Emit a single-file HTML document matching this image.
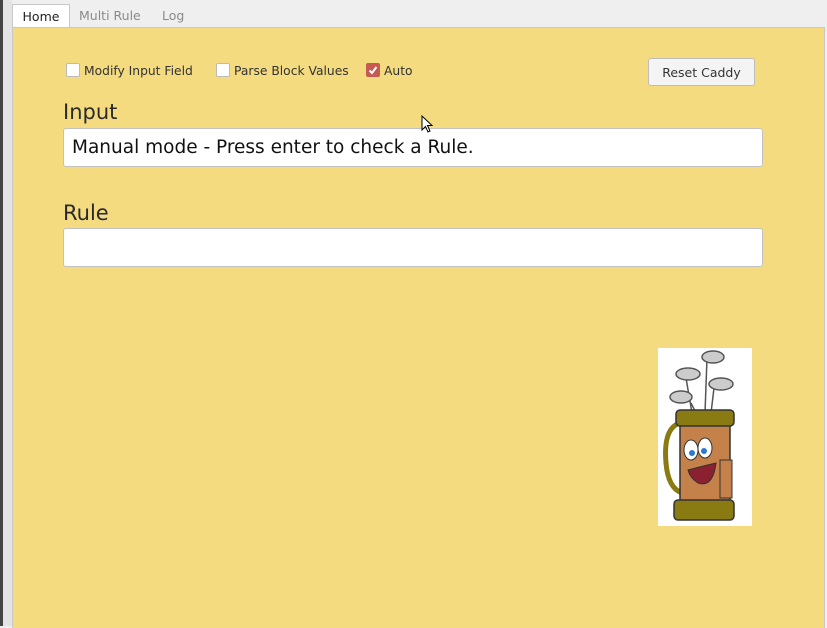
<!DOCTYPE html>
<html><head><style>
body{margin:0;width:827px;height:626px;background:#efefef;position:relative;overflow:hidden;font-family:"DejaVu Sans","Liberation Sans",sans-serif;}
.lstrip{position:absolute;left:0;top:0;width:3px;height:626px;background:#444;}
.lstrip2{position:absolute;left:3px;top:0;width:9px;height:626px;background:#e4e4e4;}
.tab{position:absolute;top:4px;height:23px;font-size:12.5px;line-height:24px;color:#8a8a8a;}
.tab.act{left:12px;width:56px;background:#fff;border:1px solid #c8c8c8;border-bottom:none;color:#222;text-align:center;height:24px;}
.panel{position:absolute;left:12px;top:27px;width:811px;height:600px;background:#f4db80;border-left:1px solid #c8c8c8;border-top:1px solid #c8c8c8;border-right:1px solid #c8c8c8;}
.cb{position:absolute;top:63px;font-size:12.3px;color:#333;line-height:15px;}
.cb i{display:inline-block;width:12px;height:12px;background:#fff;border:1px solid #bbb;border-radius:2px;vertical-align:-2px;margin-right:4px;}
.cb i.on{background:#c65a50;border-color:#c65a50;position:relative;}
.lbl{position:absolute;left:63px;font-size:21px;color:#2a2a2a;}
.inp{position:absolute;left:63px;height:39px;background:#fff;border:1px solid #c2c2c2;border-radius:3px;font-size:18.5px;line-height:37px;padding-left:8px;box-sizing:border-box;width:700px;color:#111;}
.btn{position:absolute;left:648px;top:58px;width:107px;height:28px;background:#f4f4f4;border:1px solid #bdbdbd;border-radius:3px;box-sizing:border-box;font-size:12.5px;text-align:center;line-height:27px;color:#333;}
</style></head><body>
<div class="lstrip"></div><div class="lstrip2"></div>
<div class="tab act">Home</div>
<div class="tab" style="left:79px">Multi Rule</div>
<div class="tab" style="left:162px">Log</div>
<div class="panel"></div>
<div class="cb" style="left:66px"><i></i>Modify Input Field</div>
<div class="cb" style="left:216px"><i></i>Parse Block Values</div>
<div class="cb" style="left:366px"><i class="on"><svg width="12" height="12" style="position:absolute;left:0;top:0"><path d="M2.5 6.5 L5 9 L9.5 3" stroke="#fff" stroke-width="2" fill="none"/></svg></i>Auto</div>
<div class="btn">Reset Caddy</div>
<div class="lbl" style="top:100px">Input</div>
<div class="inp" style="top:128px">Manual mode - Press enter to check a Rule.</div>
<div class="lbl" style="top:201px">Rule</div>
<div class="inp" style="top:228px"></div>
<svg style="position:absolute;left:421px;top:115px" width="14" height="20"><path d="M1 1 L1 15 L4.5 11.5 L7 17 L9 16 L6.5 10.5 L11 10.5 Z" fill="#fff" stroke="#000" stroke-width="1"/></svg>
<svg style="position:absolute;left:658px;top:348px" width="94" height="178" viewBox="0 0 94 178">
<rect width="94" height="178" fill="#fff"/>
<g stroke="#555" stroke-width="1.5">
<line x1="28" y1="30" x2="34" y2="65"/><line x1="49" y1="10" x2="47" y2="65"/><line x1="56" y1="40" x2="53" y2="65"/><line x1="33" y1="55" x2="38" y2="65"/>
<ellipse cx="30" cy="26" rx="12" ry="6" fill="#ccc"/><ellipse cx="55" cy="9" rx="11" ry="6" fill="#ccc"/><ellipse cx="63" cy="36" rx="12" ry="6" fill="#ccc"/><ellipse cx="23" cy="49" rx="11" ry="6" fill="#ccc"/>
</g>
<path d="M22 75 Q5 80 8 115 Q10 140 24 145" stroke="#8a7a12" stroke-width="5" fill="none"/>
<rect x="22" y="68" width="50" height="90" fill="#c4824a" stroke="#333" stroke-width="1.5"/>
<rect x="18" y="62" width="58" height="16" rx="4" fill="#8a7a12" stroke="#333" stroke-width="1.5"/>
<rect x="16" y="152" width="60" height="20" rx="4" fill="#8a7a12" stroke="#333" stroke-width="1.5"/>
<rect x="62" y="112" width="12" height="38" fill="#c4824a" stroke="#333"/>
<ellipse cx="33" cy="102" rx="7" ry="10" fill="#fff" stroke="#333"/><ellipse cx="47" cy="100" rx="7" ry="10" fill="#fff" stroke="#333"/>
<circle cx="34" cy="105" r="3" fill="#2a7ad0"/><circle cx="46" cy="103" r="3" fill="#2a7ad0"/>
<path d="M30 122 Q45 118 58 115 Q55 140 40 135 Q32 130 30 122 Z" fill="#8a2030" stroke="#333"/>
</svg>
</body></html>
